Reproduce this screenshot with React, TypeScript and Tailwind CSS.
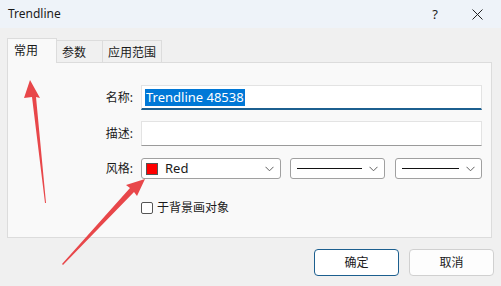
import React from "react";

const font = { fontFamily: '"Noto Sans", "Noto Sans CJK SC", sans-serif' };

function Chevron() {
  return (
    <svg width="9" height="6" viewBox="0 0 9 6" className="shrink-0">
      <path d="M0.5 0.8 L4.5 4.8 L8.5 0.8" fill="none" stroke="#606060" strokeWidth="1" />
    </svg>
  );
}

export default function App() {
  return (
    <div
      className="relative w-[501px] h-[286px] bg-[#f0f0f0] flex flex-col overflow-hidden text-[12px] text-[#1a1a1a]"
      style={font}
    >
      {/* title bar */}
      <div className="h-[28px] bg-[#eef3f9] flex items-center pl-[8px] shrink-0">
        <span className="text-[12px] leading-none">Trendline</span>
        <span className="ml-auto mr-[34px] text-[13px] leading-none">?</span>
        <svg width="11" height="11" viewBox="0 0 11 11" className="mr-[18px]">
          <path d="M0.5 0.5 L10.5 10.5 M10.5 0.5 L0.5 10.5" stroke="#222" strokeWidth="1" />
        </svg>
      </div>

      {/* tabs */}
      <div className="flex items-end pl-[7px] mt-[10px] h-[24px] shrink-0">
        <div className="relative z-10 w-[50px] h-[25px] bg-[#f9f9f9] border border-b-0 border-[#dcdcdc] flex items-center pl-[6px] -mb-px">
          常用
        </div>
        <div className="w-[46px] h-[22px] bg-[#f0f0f0] border border-l-0 border-b-0 border-[#dcdcdc] flex items-center pl-[5px] pt-[2px]">
          参数
        </div>
        <div className="w-[59px] h-[22px] bg-[#f0f0f0] border border-l-0 border-b-0 border-[#dcdcdc] flex items-center pl-[5px] pt-[2px]">
          应用范围
        </div>
      </div>

      {/* panel */}
      <div className="ml-[7px] w-[485px] h-[176px] bg-[#f9f9f9] border border-[#dcdcdc] flex flex-col pt-[22px] shrink-0">
        <div className="flex items-center h-[25px]">
          <div className="w-[133px] text-right pr-[8px]">名称:</div>
          <div className="w-[341px] h-[25px] bg-white border border-[#e3e3e3] border-b-2 border-b-[#1c5f8f] flex items-center pl-[3px]">
            <span className="bg-[#0078d7] text-white text-[13px] leading-[17px] px-[1px]">Trendline 48538</span>
          </div>
        </div>
        <div className="flex items-center h-[25px] mt-[11px]">
          <div className="w-[133px] text-right pr-[8px]">描述:</div>
          <div className="w-[341px] h-[25px] bg-white border border-[#e3e3e3] border-b-[#9a9a9a]" />
        </div>
        <div className="flex items-center h-[21px] mt-[12px]">
          <div className="w-[133px] text-right pr-[8px]">风格:</div>
          <div className="w-[140px] h-[21px] bg-white border border-[#a0a0a0] rounded-[3px] flex items-center pl-[4px] pr-[6px]">
            <div className="w-[12px] h-[12px] bg-[#ff0000] border border-[#555] mr-[7px]" />
            <span className="text-[13px]">Red</span>
            <div className="ml-auto"><Chevron /></div>
          </div>
          <div className="ml-[9px] w-[95px] h-[21px] bg-white border border-[#a0a0a0] rounded-[3px] flex items-center pl-[6px] pr-[6px]">
            <div className="w-[65px] h-px bg-[#111]" />
            <div className="ml-auto"><Chevron /></div>
          </div>
          <div className="ml-[10px] w-[87px] h-[21px] bg-white border border-[#a0a0a0] rounded-[3px] flex items-center pl-[6px] pr-[6px]">
            <div className="w-[57px] h-px bg-[#111]" />
            <div className="ml-auto"><Chevron /></div>
          </div>
        </div>
        <div className="flex items-center mt-[20px] pl-[133px]">
          <div className="w-[12px] h-[12px] bg-white border border-[#555] rounded-[2px] mr-[4px]" />
          <span>于背景画对象</span>
        </div>
      </div>

      {/* buttons */}
      <div className="flex mt-[11px] pl-[314px] gap-[10px]">
        <button className="w-[85px] h-[27px] bg-white border border-[#1c5f8f] rounded-[4px] text-[12px]">确定</button>
        <button className="w-[85px] h-[27px] bg-[#fdfdfd] border border-[#d0d0d0] rounded-[4px] text-[12px]">取消</button>
      </div>

      {/* annotation arrows */}
      <svg className="absolute inset-0 pointer-events-none" width="501" height="286" viewBox="0 0 501 286">
        <polygon points="30,80 40,98 36,97 46,203 45,203 32,97 24,98" fill="#e8474a" />
        <polygon points="145,179 137,196 134,192 63,265 62,264 130,188 126,185" fill="#e8474a" />
      </svg>
    </div>
  );
}
